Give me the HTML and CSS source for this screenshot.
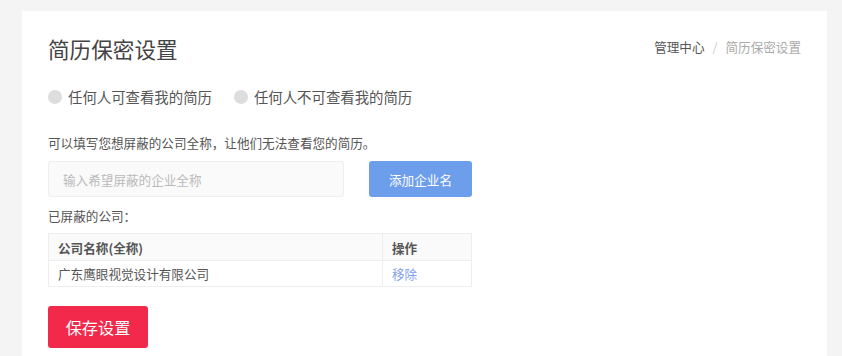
FILE: index.html
```html
<!DOCTYPE html>
<html lang="zh-CN">
<head>
<meta charset="utf-8">
<title>简历保密设置</title>
<link rel="stylesheet" href="styles.css">
</head>
<body>
<div class="panel">
  <div class="header">
    <h1 class="title">简历保密设置</h1>
    <div class="crumbs"><span class="crumb-link">管理中心</span><span class="crumb-sep">/</span><span class="crumb-current">简历保密设置</span></div>
  </div>
  <div class="radios">
    <label class="radio"><span class="dot"></span>任何人可查看我的简历</label>
    <label class="radio"><span class="dot"></span>任何人不可查看我的简历</label>
  </div>
  <p class="hint">可以填写您想屏蔽的公司全称，让他们无法查看您的简历。</p>
  <div class="add-row">
    <input class="company-input" type="text" placeholder="输入希望屏蔽的企业全称">
    <button class="btn-add" type="button">添加企业名</button>
  </div>
  <p class="label">已屏蔽的公司：</p>
  <table class="blocked">
    <thead>
      <tr><th class="col-name">公司名称(全称)</th><th class="col-op">操作</th></tr>
    </thead>
    <tbody>
      <tr><td>广东鹰眼视觉设计有限公司</td><td><a class="remove" href="#">移除</a></td></tr>
    </tbody>
  </table>
  <button class="btn-save" type="button">保存设置</button>
</div>
</body>
</html>
```
FILE: styles.css
```css
* { box-sizing: border-box; }
html, body { margin: 0; padding: 0; }
body {
  background: #f4f4f4;
  font-family: "Noto Sans CJK SC", "Noto Sans", sans-serif;
  color: #555;
  font-size: 12.6px;
  overflow: hidden;
}
.panel {
  margin: 11px 0 0 22px;
  width: 805px;
  height: 345px;
  background: #fff;
  padding: 23px 26px 0 26px;
}
.header {
  display: flex;
  justify-content: space-between;
  align-items: center;
  height: 30px;
}
.title {
  margin: 0;
  font-size: 21.6px;
  font-weight: normal;
  line-height: 30px;
  color: #444;
}
.crumbs {
  font-size: 12.6px;
  line-height: 20px;
  margin-top: -4px;
  display: flex;
  align-items: center;
}
.crumb-link { color: #555; }
.crumb-sep { color: #ccc; margin: 0 8px; }
.crumb-current { color: #aaa; }
.radios {
  display: flex;
  gap: 22px;
  margin-top: 23px;
  font-size: 14.4px;
  line-height: 20px;
  color: #555;
}
.radio {
  display: flex;
  align-items: center;
}
.dot {
  width: 14px;
  height: 14px;
  border-radius: 50%;
  background: #ddd;
  margin-right: 6px;
}
.hint {
  margin: 26px 0 0;
  line-height: 20px;
}
.add-row {
  display: flex;
  margin-top: 8px;
  gap: 25px;
}
.company-input {
  width: 296px;
  height: 36px;
  border: 1px solid #eee;
  background: #fafafa;
  border-radius: 3px;
  padding: 0 14px;
  font-family: inherit;
  font-size: 12.6px;
  color: #555;
  outline: none;
}
.company-input::placeholder { color: #bbb; }
.btn-add {
  width: 103px;
  height: 36px;
  border: none;
  border-radius: 3px;
  background: #6d9eeb;
  color: #fff;
  font-family: inherit;
  font-size: 12.6px;
  padding: 0;
}
.label {
  margin: 9px 0 0;
  line-height: 20px;
}
.blocked {
  margin-top: 7px;
  border-collapse: collapse;
  width: 424px;
  font-size: 12.6px;
}
.blocked th, .blocked td {
  border: 1px solid #eee;
  text-align: left;
  padding: 0 9px;
  height: 26px;
}
.blocked th {
  background: #fafafa;
  font-weight: bold;
  color: #555;
  height: 27px;
}
.col-op { width: 89px; }
.remove { color: #7f9ff0; text-decoration: none; }
.btn-save {
  display: block;
  margin-top: 19px;
  width: 100px;
  height: 42px;
  border: none;
  border-radius: 3px;
  background: #f2294b;
  color: #fff;
  font-family: inherit;
  font-size: 16.2px;
  padding: 0;
}
```
